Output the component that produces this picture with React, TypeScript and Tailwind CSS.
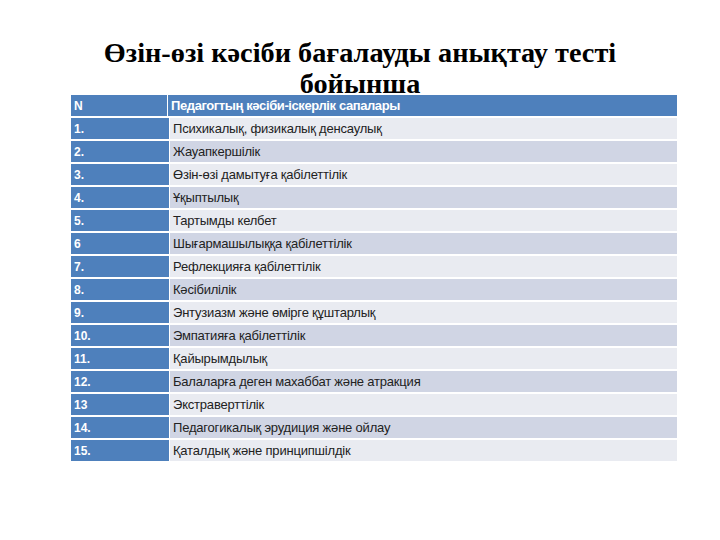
import React from "react";

const rows: [string, string][] = [
  ["1.", "Психикалық, физикалық денсаулық"],
  ["2.", "Жауапкершілік"],
  ["3.", "Өзін-өзі дамытуға қабілеттілік"],
  ["4.", "Ұқыптылық"],
  ["5.", "Тартымды келбет"],
  ["6", "Шығармашылыққа қабілеттілік"],
  ["7.", "Рефлекцияға қабілеттілік"],
  ["8.", "Кәсібилілік"],
  ["9.", "Энтузиазм және өмірге құштарлық"],
  ["10.", "Эмпатияға қабілеттілік"],
  ["11.", "Қайырымдылық"],
  ["12.", "Балаларға деген махаббат және атракция"],
  ["13", "Экстраверттілік"],
  ["14.", "Педагогикалық эрудиция және ойлау"],
  ["15.", "Қаталдық және принципшілдік"],
];

export default function App() {
  return (
    <div className="w-[720px] h-[540px] bg-white overflow-hidden">
      <h1
        className="text-center text-[28.3px] leading-[31px] font-bold text-black pt-[37px] w-[720px]"
        style={{ fontFamily: '"Liberation Serif", "Times New Roman", serif' }}
      >
        Өзін-өзі кәсіби бағалауды анықтау тесті
        <br />
        бойынша
      </h1>
      <div
        className="ml-[71px] w-[606px] mt-[-4px] flex flex-col gap-[2px]"
        style={{ fontFamily: '"Liberation Sans", Arial, sans-serif' }}
      >
        <div className="flex h-[21px] bg-[#4e80bc] text-white text-[13px] font-bold">
          <div className="w-[97px] pl-[3px] flex items-center border-r border-white text-[12px]">N</div>
          <div className="flex-1 pl-[3px] flex items-center tracking-[-0.4px]">
            Педагогтың кәсіби-іскерлік сапалары
          </div>
        </div>
        {rows.map(([n, t], i) => (
          <div key={n} className="flex h-[21px] text-[13px]">
            <div className="w-[98px] bg-[#4e80bc] text-white font-bold pl-[3px] flex items-center text-[12px]">
              {n}
            </div>
            <div
              className={
                "flex-1 ml-[1px] pl-[3px] flex items-center text-[#222] tracking-[-0.2px] " +
                (i % 2 === 0 ? "bg-[#e9ebf1]" : "bg-[#d0d5e4]")
              }
            >
              {t}
            </div>
          </div>
        ))}
      </div>
    </div>
  );
}
